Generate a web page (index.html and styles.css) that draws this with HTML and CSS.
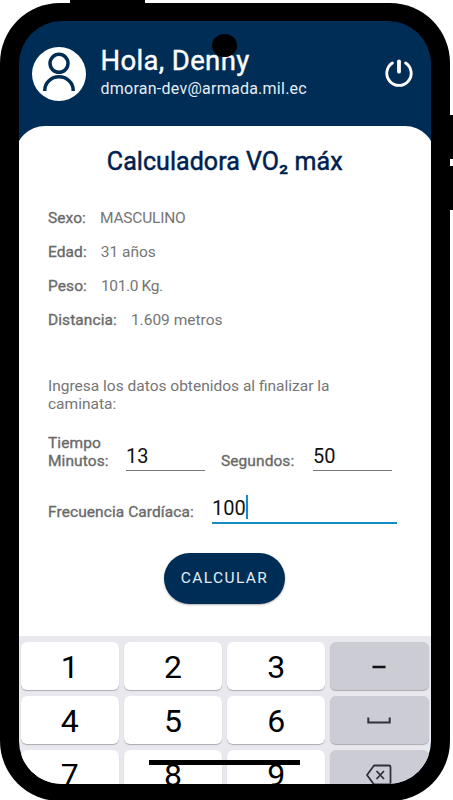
FILE: index.html
```html
<!DOCTYPE html>
<html lang="es">
  <head>
    <meta charset="utf-8" />
    <meta name="viewport" content="width=device-width, initial-scale=1" />
    <title>Calculadora VO₂ máx</title>
    <link rel="stylesheet" href="styles.css">
  </head>
  <body>
    <div class="phone">
      <!-- physical buttons on the phone -->
      <span class="side-btn top"></span>
      <span class="side-btn vol-up"></span>
      <span class="side-btn vol-down"></span>

      <div class="screen">
        <header class="header">
          <svg class="avatar" viewBox="0 0 54 54">
            <circle cx="27" cy="27" r="27" fill="#fff"/>
            <g fill="none" stroke="#002d56" stroke-width="3.5">
              <circle cx="27" cy="16.3" r="9"/>
              <path d="M12.8 44v-1a14.2 13.2 0 0 1 28.4 0v1"/>
            </g>
          </svg>
          <div class="user">
            <h1>Hola, Denny</h1>
            <p>dmoran-dev@armada.mil.ec</p>
          </div>
          <svg class="power" viewBox="0 0 28 28">
            <g fill="none" stroke="#fff" stroke-linecap="round">
              <path d="M7.4 4a12.2 12.2 0 1 0 13.2 0" stroke-width="2.8"/>
              <path d="M14 2.3v10.4" stroke-width="3.8"/>
            </g>
          </svg>
        </header>

        <main class="content">
          <h2>Calculadora VO₂ máx</h2>

          <dl class="data">
            <div><dt>Sexo:</dt><dd class="sexo">MASCULINO</dd></div>
            <div><dt>Edad:</dt><dd>31 años</dd></div>
            <div><dt>Peso:</dt><dd class="peso">101.0 Kg.</dd></div>
            <div><dt>Distancia:</dt><dd>1.609 metros</dd></div>
          </dl>

          <p class="help">Ingresa los datos obtenidos al finalizar la <br>caminata:</p>

          <form>
            <div class="row time">
              <label class="minutos">Tiempo<br>Minutos:</label>
              <div class="input small">13</div>
              <label class="segundos">Segundos:</label>
              <div class="input small">50</div>
            </div>
            <div class="row heart">
              <label>Frecuencia Cardíaca:</label>
              <div class="input active">100<span class="cursor"></span></div>
            </div>
            <button type="button" class="calc">CALCULAR</button>
          </form>
        </main>

        <div class="keyboard">
          <div class="key">1</div>
          <div class="key">2</div>
          <div class="key">3</div>
          <div class="key gray"><svg viewBox="0 0 28 22"><path d="M7.5 12h13" stroke="#111" stroke-width="2.4"/></svg></div>
          <div class="key">4</div>
          <div class="key">5</div>
          <div class="key">6</div>
          <div class="key gray"><svg viewBox="0 0 28 22"><path d="M3.3 8.5v5h21.4v-5" fill="none" stroke="#303038" stroke-width="2"/></svg></div>
          <div class="key">7</div>
          <div class="key">8</div>
          <div class="key">9</div>
          <div class="key gray">
            <svg viewBox="0 0 28 22" fill="none" stroke="#303038" stroke-width="1.8">
              <path d="M9 2.5h15q1.5 0 1.5 1.5v16q0 1.5-1.5 1.5h-15l-7-9.5z" stroke-linejoin="round"/>
              <path d="M11.5 8l7.5 8M19 8l-7.5 8"/>
            </svg>
          </div>
        </div>
      </div>

      <span class="camera"></span>
      <span class="home-bar"></span>
    </div>
  </body>
</html>
```

FILE: styles.css
```css
* {
  box-sizing: border-box;
}

body {
  margin: 0;
  padding-top: 3px;
  height: 800px;
  overflow: hidden;
  background: #fff;
  font-family: Roboto, "Liberation Sans", sans-serif;
}

h1, h2, p, dl, dd {
  margin: 0;
  font-weight: 400;
}

.phone {
  position: relative;
  width: 449.5px;
  height: 798px;
  padding: 17.5px 19px 16px;
  background: #000;
  border-radius: 60px;
}

.screen {
  display: flex;
  flex-direction: column;
  width: 411.5px;
  height: 763.5px;
  overflow: hidden;
  background: #002d56;
  border-radius: 43px;
}

/* phone buttons */
.side-btn {
  position: absolute;
  right: -4px;
  width: 5px;
  height: 44px;
  background: #000;
}

.vol-up { top: 112px; }
.vol-down { top: 163px; }

.side-btn.top {
  top: -3px;
  left: 70px;
  width: 75px;
  height: 4px;
}

.camera {
  position: absolute;
  top: 31px;
  left: 212px;
  width: 25px;
  height: 23px;
  border-radius: 50%;
  background: #000;
}

.home-bar {
  position: absolute;
  top: 757px;
  left: 149px;
  width: 151px;
  height: 5px;
  background: #000;
}

/* header */
.header {
  display: flex;
  flex: none;
  height: 105.5px;
  padding: 26px 18px 0 12.5px;
  color: #fff;
}

.avatar {
  width: 54px;
  height: 54px;
}

.user {
  flex: 1;
  margin-left: 15px;
  white-space: nowrap;
}

.user h1 {
  height: 31px;
  font-size: 27.5px;
  line-height: 28px;
  letter-spacing: 0.35px;
  -webkit-text-stroke: 0.4px #fff;
}

.user p {
  color: #e6eef5;
  font-size: 16px;
  line-height: 21px;
  letter-spacing: 0.25px;
}

.power {
  width: 28px;
  height: 28px;
  margin-top: 12.5px;
}

/* content, a bit wider than the screen so the corners get cut */
.content {
  flex: none;
  height: 509.5px;
  margin: 0 -4px;
  padding: 21px 33px 0;
  background: #fff;
  border-radius: 30px 30px 0 0;
  color: #757575;
}

h2 {
  color: #001f50;
  font-size: 25px;
  line-height: 30px;
  letter-spacing: 0.05px;
  text-align: center;
  -webkit-text-stroke: 0.5px #001f50;
}

.data {
  margin-top: 23.5px;
  font-size: 15.5px;
}

.data div {
  display: flex;
  gap: 14px;
  height: 34px;
  line-height: 34px;
}

.data dt,
label {
  color: #6a6a6a;
  letter-spacing: 0.08px;
  -webkit-text-stroke: 0.35px #6a6a6a;
}

.data .sexo {
  letter-spacing: -0.2px;
}

.data .peso {
  letter-spacing: -0.35px;
}

.help {
  margin-top: 40px;
  font-size: 15.5px;
  line-height: 18px;
  white-space: nowrap;
}

.row {
  display: flex;
  font-size: 15.5px;
  line-height: 18px;
  white-space: nowrap;
}

.time {
  height: 37px;
  margin-top: 21px;
}

.minutos {
  width: 78px;
}

.segundos {
  width: 108px;
  padding: 18px 0 0 16px;
}

.input {
  color: #111;
  font-size: 20px;
  line-height: 27px;
}

.small {
  width: 79px;
  padding-top: 9px;
  border-bottom: 1px solid #777;
}

.heart {
  height: 32px;
  margin-top: 23px;
}

.heart label {
  width: 164px;
  padding-top: 9px;
}

.active {
  display: flex;
  width: 185px;
  height: 30px;
  padding-top: 1px;
  border-bottom: 2px solid #148bc4;
}

.cursor {
  width: 2px;
  height: 24px;
  background: #148bc4;
}

.calc {
  display: block;
  width: 121px;
  height: 51px;
  margin: 27px auto 0 116px;
  padding: 0;
  border: 0;
  border-radius: 26px;
  background: #002d56;
  box-shadow: 0 1px 2px rgba(0, 0, 0, 0.3);
  color: #e2edf2;
  font: 15.5px Roboto, sans-serif;
  letter-spacing: 1.4px;
}

/* keyboard */
.keyboard {
  display: grid;
  flex: 1;
  grid-template-columns: repeat(4, 98.5px);
  grid-auto-rows: 48px;
  gap: 6px 4.7px;
  padding: 6.5px 1.5px 0;
  background: #e8e8ee;
}

.key {
  display: flex;
  align-items: center;
  justify-content: center;
  padding-top: 2px;
  border-radius: 6px;
  background: #fff;
  box-shadow: 0 1px 1px #aaaab0;
  color: #000;
  font-size: 32px;
}

.gray {
  padding: 0;
  background: #cbccd4;
}

.gray svg {
  width: 28px;
  height: 22px;
}
```
